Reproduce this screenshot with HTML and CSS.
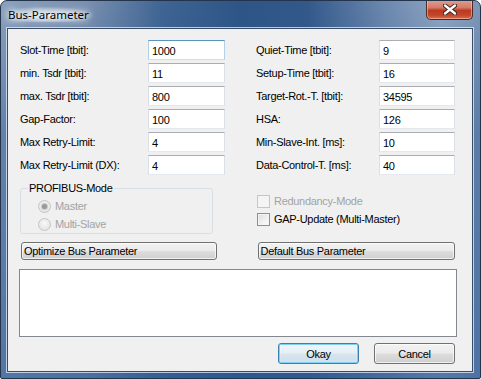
FILE: index.html
```html
<!DOCTYPE html>
<html>
<head>
<meta charset="utf-8">
<link rel="stylesheet" href="styles.css">
</head>
<body>
<div class="window">
  <div class="titlebar">
    <span class="title">Bus-Parameter</span>
    <button class="close" aria-label="Close">
      <svg width="14" height="11" viewBox="0 0 14 11">
        <path d="M2 1.5 L12 9.5 M12 1.5 L2 9.5" stroke="#3a1d18" stroke-width="4.2" stroke-linecap="round" fill="none"/>
        <path d="M2 1.5 L12 9.5 M12 1.5 L2 9.5" stroke="#ffffff" stroke-width="2.4" stroke-linecap="round" fill="none"/>
      </svg>
    </button>
  </div>
  <div class="client">
    <div class="params">
      <div class="col">
        <div class="row"><span class="lbl">Slot-Time [tbit]:</span><input class="field focus" value="1000"></div>
        <div class="row"><span class="lbl">min. Tsdr [tbit]:</span><input class="field" value="11"></div>
        <div class="row"><span class="lbl">max. Tsdr [tbit]:</span><input class="field" value="800"></div>
        <div class="row"><span class="lbl">Gap-Factor:</span><input class="field" value="100"></div>
        <div class="row"><span class="lbl">Max Retry-Limit:</span><input class="field" value="4"></div>
        <div class="row"><span class="lbl">Max Retry-Limit (DX):</span><input class="field" value="4"></div>
      </div>
      <div class="col">
        <div class="row"><span class="lbl">Quiet-Time [tbit]:</span><input class="field" value="9"></div>
        <div class="row"><span class="lbl">Setup-Time [tbit]:</span><input class="field" value="16"></div>
        <div class="row"><span class="lbl">Target-Rot.-T. [tbit]:</span><input class="field" value="34595"></div>
        <div class="row"><span class="lbl">HSA:</span><input class="field" value="126"></div>
        <div class="row"><span class="lbl">Min-Slave-Int. [ms]:</span><input class="field" value="10"></div>
        <div class="row"><span class="lbl">Data-Control-T. [ms]:</span><input class="field" value="40"></div>
      </div>
    </div>
    <div class="modes">
      <fieldset class="group">
        <legend>PROFIBUS-Mode</legend>
        <div class="opt disabled"><span class="radio checked"></span>Master</div>
        <div class="opt disabled"><span class="radio"></span>Multi-Slave</div>
      </fieldset>
      <div class="checks">
        <div class="opt disabled"><span class="check"></span>Redundancy-Mode</div>
        <div class="opt"><span class="check"></span>GAP-Update (Multi-Master)</div>
      </div>
    </div>
    <div class="actions">
      <button class="btn wide left">Optimize Bus Parameter</button>
      <button class="btn wide right">Default Bus Parameter</button>
    </div>
    <div class="log"></div>
    <div class="footer">
      <button class="btn dlg default">Okay</button>
      <button class="btn dlg">Cancel</button>
    </div>
  </div>
</div>
</body>
</html>
```
FILE: styles.css
```css
* { box-sizing: border-box; }
html, body { margin: 0; padding: 0; background: #ffffff; }

.window {
  width: 481px;
  height: 379px;
  border: 1px solid #24344b;
  border-radius: 7px 7px 2px 2px;
  display: flex;
  flex-direction: column;
  overflow: hidden;
  background:
    linear-gradient(to bottom, rgba(40, 80, 140, 0) 0%, rgba(40, 85, 145, 0.4) 35%, rgba(45, 90, 150, 0.6) 100%),
    linear-gradient(to right, #8aa0bc 0%, #7990b0 18%, #3e6492 34%, #2e5586 50%, #33598a 64%, #6c88ae 80%, #8fa6c2 92%, #7d96b6 100%);
}

.titlebar {
  height: 27px;
  display: flex;
  align-items: flex-start;
  flex: none;
}

.title {
  font-family: "Noto Sans", "Open Sans", sans-serif;
  font-size: 11.5px;
  color: #000;
  margin: 6px 0 0 7px;
  line-height: 15px;
  padding: 0 4px 0 0;
  text-shadow: 0 0 6px #fff, 0 0 10px #fff, 0 0 14px rgba(255,255,255,0.9);
  background: radial-gradient(ellipse at 45% 55%, rgba(240,244,250,0.85) 0%, rgba(220,230,242,0.55) 45%, rgba(200,214,232,0) 75%);
  border-radius: 10px;
}

.close {
  margin: -1px 7px 0 auto;
  width: 47px;
  height: 20px;
  border: 1px solid #4d2a27;
  border-top: none;
  border-radius: 0 0 5px 5px;
  padding: 0;
  display: flex;
  align-items: center;
  justify-content: center;
  background: linear-gradient(to bottom, #e0a092 0%, #d27b67 40%, #bd3a20 55%, #c2462a 80%, #d8704c 100%);
  box-shadow: inset 0 0 0 1px rgba(255, 210, 200, 0.5);
}

.client {
  flex: 1;
  margin: 0 7px 6px 6px;
  border: 1px solid #3a4d66;
  box-shadow: 0 0 0 1px rgba(230, 238, 248, 0.75);
  background: #f0f0f0;
  padding: 11px 17px 0 12px;
  display: flex;
  flex-direction: column;
  font-family: "Liberation Sans", Arial, sans-serif;
  font-size: 11px;
  letter-spacing: -0.3px;
  color: #000;
}

.params {
  display: grid;
  grid-template-columns: 205px 199px;
  column-gap: 31px;
}

.col {
  display: flex;
  flex-direction: column;
  gap: 3px;
}

.row {
  display: flex;
  align-items: center;
  justify-content: space-between;
  height: 20px;
}

.lbl { white-space: nowrap; }

.field {
  width: 77px;
  height: 20px;
  margin: 0;
  padding: 1px 3px 0 3px;
  font: inherit;
  letter-spacing: inherit;
  color: #000;
  background: #fff;
  border: 1px solid #dbdfe6;
  border-top-color: #abadb3;
  border-bottom-color: #e3e9ef;
  outline: none;
}
.col + .col .field { width: 76px; }
.field.focus {
  border-color: #b5cfe7;
  border-top-color: #5794bf;
  border-bottom-color: #c7e2f1;
}

.modes {
  display: flex;
  align-items: flex-start;
  margin-top: 7px;
}

.group {
  width: 193px;
  margin: 0;
  padding: 2px 0 0 17px;
  border: 1px solid #d5dfe5;
  border-radius: 3px;
  height: 52px;
}
.group legend {
  padding: 0 1px;
  margin-left: -10px;
  line-height: 13px;
  color: #000;
}

.opt {
  display: flex;
  align-items: center;
  height: 18px;
  white-space: nowrap;
}
.opt.disabled { color: #a3a3a3; }

.radio {
  width: 13px;
  height: 13px;
  border-radius: 50%;
  border: 1px solid #c4c4c4;
  background: radial-gradient(circle at 50% 40%, #f8f8f8 0%, #e6e6e6 70%, #dcdcdc 100%);
  margin-right: 4px;
  display: flex;
  align-items: center;
  justify-content: center;
}
.radio.checked::after {
  content: "";
  width: 5px;
  height: 5px;
  border-radius: 50%;
  background: #9a9a9a;
  box-shadow: 0 0 0 1px #c8c8c8;
}

.checks {
  margin: 10px 0 0 44px;
  display: flex;
  flex-direction: column;
}
.check {
  width: 13px;
  height: 13px;
  border: 1px solid #8e8f8f;
  background: linear-gradient(135deg, #dcdcdc 0%, #f2f2f2 60%, #fbfbfb 100%);
  box-shadow: inset 0 0 0 1px #f4f4f4;
  margin-right: 4px;
}
.opt.disabled .check {
  border-color: #c6c6c6;
  background: #f4f4f4;
  box-shadow: none;
}

.btn {
  font: inherit;
  letter-spacing: inherit;
  color: #000;
  border: 1px solid #707070;
  border-radius: 3px;
  background: linear-gradient(to bottom, #f2f2f2 0%, #ebebeb 48%, #dddddd 52%, #cfcfcf 100%);
  box-shadow: inset 0 0 0 1px rgba(255, 255, 255, 0.7);
  margin: 0;
  padding: 0;
}

.actions {
  display: flex;
  margin-top: 8px;
}
.btn.wide {
  height: 18px;
  text-align: left;
  padding: 0 0 0 2px;
}
.btn.wide.left { width: 196px; margin-left: 1px; }
.btn.wide.right { width: 198px; margin-left: 41px; }

.log {
  margin: 9px 0 0 -1px;
  width: 438px;
  height: 68px;
  border: 1px solid #828790;
  background: #fff;
}

.footer {
  display: flex;
  justify-content: flex-end;
  gap: 15px;
  margin-top: 6px;
}
.btn.dlg {
  width: 81px;
  height: 21px;
  text-align: center;
  padding-top: 1px;
}
.btn.default {
  border-color: #3c7fb1;
  background: linear-gradient(to bottom, #f0f6fa 0%, #e6eff6 48%, #d8e5ef 52%, #cddde9 100%);
  box-shadow: inset 0 0 0 1px #7fd0f5, inset 0 0 2px 1px rgba(255,255,255,0.6);
}
```
